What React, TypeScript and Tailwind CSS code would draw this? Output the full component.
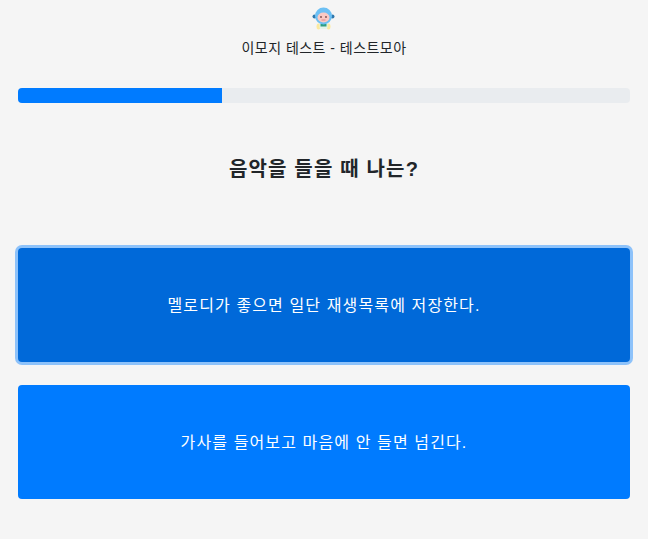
const Mascot = () => (
  <svg width="24" height="24" viewBox="0 0 24 24" className="block">
    <ellipse cx="6.5" cy="20.5" rx="2" ry="3" fill="#fbe9a0" />
    <ellipse cx="16.5" cy="20.5" rx="2" ry="3" fill="#fbe9a0" />
    <rect x="7.5" y="16" width="8" height="7" rx="2" fill="#e2f5ea" />
    <rect x="8.5" y="18" width="6" height="2.5" fill="#2f9e83" />
    <circle cx="2.5" cy="10.5" r="2" fill="#2f78ad" />
    <circle cx="20.5" cy="10.5" r="2" fill="#2f78ad" />
    <circle cx="11.5" cy="10" r="8.5" fill="#6cc0f4" />
    <ellipse cx="11.5" cy="11.5" rx="6" ry="5" fill="#f9c9c4" />
    <circle cx="9" cy="11" r="0.9" fill="#7a4a4a" />
    <circle cx="14" cy="11" r="0.9" fill="#7a4a4a" />
    <rect x="9.5" y="13.5" width="4" height="1" fill="#e08a8a" />
  </svg>
);

const choices = [
  { text: "멜로디가 좋으면 일단 재생목록에 저장한다.", focused: true },
  { text: "가사를 들어보고 마음에 안 들면 넘긴다.", focused: false },
];

export default function App() {
  return (
    <div className="min-h-[539px] bg-[#f5f5f5] px-[18px] font-['Liberation_Sans','Noto_Sans_CJK_KR',sans-serif] text-[#212529]">
      <header className="flex flex-col items-center">
        <div className="mt-[6px]">
          <Mascot />
        </div>
        <p className="mt-[8px] text-[14px] leading-[21px] tracking-[0.47px]">이모지 테스트 - 테스트모아</p>
      </header>
      <div className="mt-[29px] h-[15px] overflow-hidden rounded-[4px] bg-[#e9ecef]">
        <div className="h-full w-1/3 bg-[#007bff]" />
      </div>
      <h1 className="mt-[51px] text-center text-[20px] leading-[30px] font-bold tracking-[1.17px]">음악을 들을 때 나는?</h1>
      <div className="mt-[64px] flex flex-col gap-[23px]">
        {choices.map((c) => (
          <button
            key={c.text}
            className={
              c.focused
                ? "h-[114px] w-full rounded-[4px] bg-[#0069d9] pt-[1px] text-[16px] tracking-[1.12px] text-white shadow-[0_0_0_3px_rgba(38,143,255,0.5)]"
                : "h-[114px] w-full rounded-[4px] bg-[#007bff] pt-[1px] text-[16px] tracking-[1.12px] text-white"
            }
          >
            {c.text}
          </button>
        ))}
      </div>
    </div>
  );
}
